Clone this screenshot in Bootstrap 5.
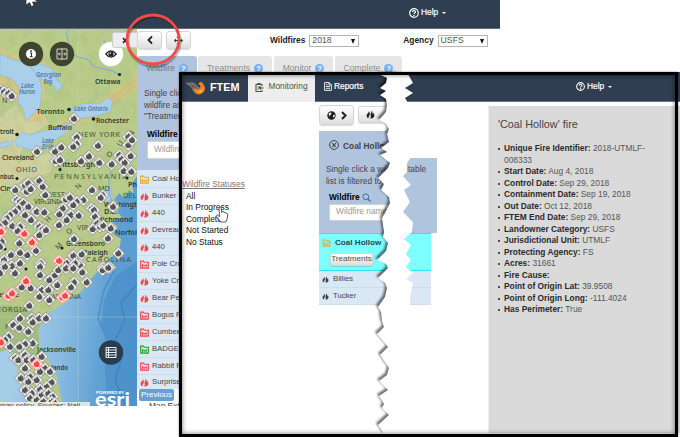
<!DOCTYPE html>
<html lang="en">
<head>
<meta charset="utf-8">
<meta name="viewport" content="width=device-width, initial-scale=1">
<title>FTEM Monitoring</title>
<link href="https://cdn.jsdelivr.net/npm/bootstrap@5.3.0/dist/css/bootstrap.min.css" rel="stylesheet">
<style>
:root{--navy:#2f3e50;--steel:#b0c4de;--pale:#dae8f6}
body{width:680px;height:437px;overflow:hidden;background:#fff;font-family:"Liberation Sans",Arial,sans-serif;font-size:8.4px;line-height:11.5px;color:#444}
svg{display:block;flex:none}
.desk{width:680px;height:437px}
.win-back{left:0;top:0;width:500px;height:406px;background:#fff}
.win-front{left:179px;top:72px;width:501px;height:365px;background:#fff}
.frame{left:179px;top:72px;width:499px;height:365px;border:3px solid #000;box-shadow:inset 0 0 5px rgba(0,0,0,.55),0 0 2px rgba(0,0,0,.45)}
.topbar{background:var(--navy);color:#fff}
.win-back .topbar{height:29px;border-bottom:1px solid #626c7a;padding-left:409px;padding-bottom:2px}
.stroke{-webkit-text-stroke:.2px currentColor}
.help-text{margin:0 4px 0 2px}
.caret{width:0;height:0;border:2.2px solid transparent;border-top-color:#fff;border-bottom:0}
.map-pane{width:137px;height:377px}
.tool-row{height:27px;padding-top:2px}
.tool{border:1px solid #d6d6d6;border-radius:3px;background:linear-gradient(#fff,#dedede);box-shadow:0 1px 1px rgba(0,0,0,.15)}
.tool-row .tool{height:18px;width:25px}
.pick-fire{margin-left:79px}
.pick-agency{margin-left:44px}
.combo{height:12px;width:50px;border:1px solid #b5b5b5;background:#fff;padding:0 3px 0 2px;color:#555;font-size:8.7px}
.tri{width:0;height:0;border:2.5px solid transparent;border-top:5px solid #111;border-bottom:0}
.b{font-weight:700;color:#222}
.tab{height:20px;background:#e6e6e6;border-radius:3px 3px 0 0;color:#8c8c8c;padding-top:5px;font-size:8.6px}
.tab.on{background:var(--steel);color:#777}
.t1{width:60px}.t2{width:74px;margin-left:1px}.t3{width:59px;margin-left:2px}.t4{width:67px;margin-left:2px}
.q{width:9px;height:9px;border-radius:50%;background:#79aef0;color:#fff;font-size:7.5px;line-height:9px;font-weight:700;text-align:center}
.blue{background:var(--steel)}
.back-card{height:94px;width:60px;padding:12px 0 0 7px;white-space:nowrap;overflow:hidden}
.lab{margin:6px 0 1px 3px}
.field{background:#fff;border:1px solid #d0d4da;border-radius:2px;color:#999;height:18px;padding-left:6px;margin-left:3px}
.fires{background:var(--pale)}
.fires>div{height:17px;font-size:7.7px;padding-left:3px;border-bottom:1px solid #cfddeb;white-space:nowrap}
#fires{padding-top:1px}
#fires>div:last-child{height:14px;border-bottom:0}
#fires svg{margin-right:3px}
#fires .folder,#fires .flame{color:#f0444c}
#fires .amber{color:#f0a91c}
#fires .green{color:#1ca31c}
.pager{background:#6c9fcf;color:#fff;border-radius:2px;height:12px;width:35px;font-size:8px;margin-left:2px}
.front-bar{height:30px;border-bottom:1px solid #6a7688}
.brand{width:69px;font-size:10.8px;padding-left:7px;height:30px;padding-top:3px}
.on-tab{width:67px;height:30px;background:#ededed;color:#4a5a3c;padding-top:1px}
.reports{width:252px;padding-left:9px}
.front-help{padding-left:9px}
.status{width:137px;padding:77px 0 0 3px;color:#111}
.status-head{color:#777}
.mid{width:172px;padding:3px 0 0 3px}
.mid-tools{height:26px}
.globe{width:35px;height:20px}
.torch{width:34px;height:17px;margin-top:1px;padding-left:7px;color:#222}
.head-card{height:27px;width:76px;color:#444;padding-left:10px}
.body-card{height:75px;width:118px;padding:6px 0 0 7px;white-space:nowrap}
.body-card .lab{margin:5px 0 0 3px}
.body-card .field{width:70px;height:17px}
.cut{width:82px}
.cyan{height:38px;width:112px;background:#7dffff;border-top:1px solid #2fe6ea;border-bottom:1px solid #2fe6ea;padding:3px 0 0 3px;color:#244a52;font-size:8.1px}
.amber-ic{color:#e0a83c}
.treat{width:43px;height:13px;margin:4px 0 0 8px;color:#555}
.half{width:112px}
.detail{background:#dadada;height:327px;width:192px;border-left:1px solid #eee;padding:12px 25px 0 9px;color:#555}
.detail h2{font-size:10.8px;line-height:12px;color:#444;font-weight:400;margin:0 0 13px}
.detail ul{padding-left:6px;list-style:none}
.detail li{position:relative;line-height:11.5px}
.detail li::before{content:"";position:absolute;left:-6px;top:5px;width:2.4px;height:2.4px;border-radius:50%;background:#222}
.detail b{color:#2b2b2b}
.torn{filter:drop-shadow(-1.5px -1.5px 1px rgba(0,0,0,.55))}
.city text{font-family:"Noto Sans","Open Sans",sans-serif;font-weight:600;font-size:7.2px;fill:#303a2c}
.state text{font-family:"Noto Sans",sans-serif;font-size:7.3px;fill:#455039}
.water text{font-family:"Open Sans",sans-serif;font-style:italic;font-weight:600;font-size:6.6px;fill:#4474a8}
</style>
<script src="https://cdn.jsdelivr.net/npm/bootstrap@5.3.0/dist/js/bootstrap.bundle.min.js"></script>
</head>
<body>
<svg width="0" height="0" class="position-absolute"><defs>
<g id="pin"><path d="M0-6.300 6.300 0 0 6.300-6.300 0Z" fill="#e9e9e9" stroke="#8e8e8e" stroke-width=".8" stroke-linejoin="round"/><path d="M.3-3.800C1-2.300 3.100-1.600 3 .5 2.900 2.300 1.600 3.100 0 3.100-1.700 3.100-3 2.200-3 .4c0-1.100.6-1.900 1.100-2.500l.7.9C-.9-2.300-.2-2.700.3-3.800Z" fill="#555"/></g>
<g id="hot"><path d="M0-6.300 6.300 0 0 6.300-6.300 0Z" fill="#ffdede" stroke="#f88" stroke-width=".8" stroke-linejoin="round"/><path d="M.3-3.800C1-2.300 3.100-1.600 3 .5 2.900 2.300 1.600 3.100 0 3.100-1.700 3.100-3 2.200-3 .4c0-1.100.6-1.900 1.100-2.500l.7.9C-.9-2.300-.2-2.700.3-3.800Z" fill="#fb4646"/></g>
<symbol id="flame" viewBox="0 0 10 10"><path d="M3.200 1.200C3.600 3 .7 4 .7 6.500.7 8 1.700 9 3 9.300 2.600 8 3 7.300 3.700 6.500 4.500 5.300 4.600 3 3.200 1.200Z" fill="currentColor"/><path d="M6.300.5C6.500 2.500 4.900 3.500 5 5.200 5.100 6 5.500 6.500 5.400 7.200 5.200 8 4.800 8.500 4.600 9.300 7.500 9.600 9.400 8 9.300 6 9.200 4.500 8.400 3.800 7.900 3 7.700 3.800 7.600 4.200 7.100 4.500 7.500 3 7.200 1.300 6.300.5Z" fill="currentColor"/></symbol>
<symbol id="folder" viewBox="0 0 10 10"><path d="M.8 9V1.300h3l.8 1.200h4.600V9Z" fill="none" stroke="currentColor" stroke-width="1.300"/><path d="M2.800 8.500V4.300M2.800 6h1.900v2M6.800 8.500V4.500M4.700 6h3" fill="none" stroke="currentColor" stroke-width="1"/></symbol>
<symbol id="help" viewBox="0 0 10 10"><circle cx="5" cy="5" r="4.300" fill="none" stroke="currentColor" stroke-width="1.200"/><path d="M3.500 4C3.500 2 6.600 2.100 6.500 3.900 6.400 4.900 5 4.900 5 6.100" fill="none" stroke="currentColor" stroke-width="1.200"/><circle cx="5" cy="7.500" r=".75" fill="currentColor"/></symbol>
</defs></svg>

<main class="desk position-relative overflow-hidden">
<section class="win-back position-absolute overflow-hidden">
  <nav class="topbar d-flex align-items-center">
    <svg width="10" height="10"><use href="#help"/></svg><span class="stroke help-text">Help</span><span class="caret"></span>
  </nav>
  <div class="d-flex">
    <div class="map-pane">
      <svg width="137" height="377" viewBox="0 29 137 377">
        <defs><linearGradient id="sea" x1="0" x2="1" y1=".3" y2=".6"><stop offset=".25" stop-color="#a5cde8"/><stop offset=".55" stop-color="#8bbce1"/><stop offset=".85" stop-color="#5f9fd3"/><stop offset="1" stop-color="#5a9dd0"/></linearGradient>
        <filter id="relief" x="0" y="0" width="100%" height="100%"><feTurbulence type="fractalNoise" baseFrequency=".09" numOctaves="3" seed="4"/><feColorMatrix values="0 0 0 0 .32  0 0 0 0 .45  0 0 0 0 .15  1.500 0 0 0 -.62"/></filter>
        <clipPath id="landclip"><path id="coast" d="M0 29H137V176L132 184 134 194 129 190 124 198 119 193 114 200 121 205 117 212 122 217 112 222 118 227 113 234 121 239 119 251 108 260 89 281 82 291 65 303 45 315 38 331 41 347 49 361 57 377 61 397 62 406H30L18 378 16 361 7 350 0 352Z"/></clipPath></defs>
        <rect y="29" width="137" height="377" fill="url(#sea)"/>
        <path d="M137 262 116 275 104 300 101 325 111 345 105 365 107 406H137Z" fill="#3f87c3" opacity=".5"/>
        <path d="M137 284 121 303 125 320 115 340 121 360 115 380 126 406M114 271 104 290 98 318 107 340" fill="none" stroke="#2f76b3" stroke-width="1.500" opacity=".45"/>
        <use href="#coast" fill="#b9cc8b"/>
        <g clip-path="url(#landclip)">
          <path d="M0 118 16 104 23 118 40 109 49 124 26 137 17 166 0 178ZM28 157 55 152 51 172 22 180 0 195V177Z" fill="#d6d2a5" opacity=".8"/>
          <path d="M0 48 25 60 39 57 58 72 45 88 43 122 25 122 20 105 0 84ZM88 108 137 74V89L103 112 88 122 71 127 51 133 31 147 24 140Z" fill="#dcc583" opacity=".65"/>
          <path d="M0 305 30 307 42 328 35 359 7 350 0 352Z" fill="#a4bf7c"/>
          <rect y="29" width="137" height="377" filter="url(#relief)" opacity=".35"/>
        </g>
        <g fill="#a9cfea" stroke="#83b4d6" stroke-width=".5">
          <path d="M0 54 14 60 25 62 32 69 39 75 42 90 40 107 26 121 23 108 18 103 20 88 11 78 0 75Z"/>
          <path d="M29 62 44 65 52 69 58 76 56 80 63 84 58 92 52 83 43 80 34 72Z"/>
          <path d="M71 110 82 104 101 103 108 97 113 102 110 112 96 116 76 119Z"/>
          <path d="M15 140 23 132 28 135 36 133 48 130 72 122 71 130 49 143 31 150 17 146Z"/>
          <path d="M0 143 13 141 12 145 0 148ZM104 190 110 187 113 198 106 203Z"/>
        </g>
        <path d="M66 32C70 43 66 47 73 54S87 55 91 63s18 3 28 12M102 63C107 56 108 48 104 40M111 171C107 185 108 195 117 214M51 143 61 165 59 180" fill="none" stroke="#86aecb" stroke-width="1.200"/>
        <path d="M109 100 137 78V84L111 106M22 180 51 176 57 155M78 155H134M41 223 68 198 90 176M41 274 72 249 91 240 120 233M2 301 48 301" stroke="#cbb67d" fill="none" stroke-width="1.200" opacity=".8"/>
        <path d="M78 29V406M0 317H137" stroke="#d5e5c7" stroke-width=".5" opacity=".6"/>
        <g fill="#1b1b1b"><circle cx="119.500" cy="74.500" r="1.600"/><circle cx="69" cy="109.500" r="1.800"/><circle cx="93.500" cy="119" r="1.800"/><circle cx="17" cy="134.500" r="1.800"/><circle cx="17" cy="178.500" r="1.500"/><circle cx="60" cy="169.500" r="1.500"/><circle cx="127" cy="178" r="1.500"/><circle cx="5" cy="249" r="1.500"/><circle cx="62" cy="248" r="1.500"/><circle cx="26" cy="269" r="1.500"/><circle cx="37" cy="344" r="1.500"/></g>
        <g class="water"><text x="36" y="77" textLength="25" lengthAdjust="spacingAndGlyphs">Georgian</text><text x="43.500" y="83.500" textLength="9" lengthAdjust="spacingAndGlyphs">Bay</text><text x="21" y="88" textLength="13" lengthAdjust="spacingAndGlyphs">Lake</text><text x="19" y="94" textLength="16" lengthAdjust="spacingAndGlyphs">Huron</text><text x="74" y="111" textLength="34" lengthAdjust="spacingAndGlyphs">Lake Ontario</text><text x="42" y="142.500" textLength="12" lengthAdjust="spacingAndGlyphs">Lake</text><text x="42" y="149" textLength="11" lengthAdjust="spacingAndGlyphs">Erie</text></g>
        <g class="state"><text x="78" y="136.500" textLength="42">NEW YORK</text><text x="2" y="103">N</text><text x="16" y="172" textLength="21">OHIO</text><text x="54" y="178.500" textLength="73">PENNSYLVANIA</text><text x="46" y="197">WEST</text><text x="34" y="204" textLength="29">VIRGINIA</text><text x="98" y="191">MD</text><text x="123" y="198">DEL</text><text x="77" y="230">VIRG</text><text x="86" y="262" textLength="45">CAROLINA</text><text x="47" y="299" textLength="34">CAROLINA</text><text x="-3" y="312" textLength="30">EORGIA</text><text x="5" y="329">P</text><text transform="rotate(-45 78 190)" x="78" y="190">N</text><text transform="rotate(-45 48 223)" x="48" y="223">H</text><text transform="rotate(-45 69 235)" x="69" y="235">O</text><text transform="rotate(-45 58 250)" x="58" y="250">M</text><text transform="rotate(-40 109 158)" x="109" y="158">O</text><text transform="rotate(-60 121 147)" x="121" y="147">U</text><text transform="rotate(-60 132 137)" x="132" y="137">N</text></g>
        <g class="city"><text x="95" y="84" textLength="25.500" lengthAdjust="spacingAndGlyphs">Ottawa</text><text x="36.500" y="113.500" textLength="28" lengthAdjust="spacingAndGlyphs">Toronto</text><text x="96" y="123" textLength="33" lengthAdjust="spacingAndGlyphs">Rochester</text><text x="48" y="130" textLength="24" lengthAdjust="spacingAndGlyphs">Buffalo</text><text x="0" y="133.500" textLength="14" lengthAdjust="spacingAndGlyphs">troit</text><text x="2" y="160" textLength="32" lengthAdjust="spacingAndGlyphs">Cleveland</text><text x="58" y="166.500" textLength="37" lengthAdjust="spacingAndGlyphs">Pittsburgh</text><text x="0" y="179" textLength="14" lengthAdjust="spacingAndGlyphs">nbus</text><text x="0" y="191">Cin</text><text x="128" y="187">Ph</text><text x="104" y="207" textLength="42" lengthAdjust="spacingAndGlyphs">Washington</text><text x="104" y="214">D.C.</text><text x="98" y="222" textLength="35" lengthAdjust="spacingAndGlyphs">Richmond</text><text x="115" y="234.500" textLength="26" lengthAdjust="spacingAndGlyphs">Norfolk</text><text x="66" y="245.500" textLength="39" lengthAdjust="spacingAndGlyphs">Greensboro</text><text x="83" y="254.500" textLength="25" lengthAdjust="spacingAndGlyphs">Raleigh</text><text x="-10" y="297" textLength="29" lengthAdjust="spacingAndGlyphs">Charlotte</text><text x="37" y="352" textLength="39" lengthAdjust="spacingAndGlyphs">Jacksonville</text><text x="44" y="370" textLength="24" lengthAdjust="spacingAndGlyphs">Orlando</text></g>
        <g id="pins"></g>
        <circle cx="31" cy="54" r="12.200" fill="#3f442e"/><circle cx="31" cy="54" r="5" fill="#fff"/><path d="M30 53h1.500v3.500M29.700 56.700h3" stroke="#333" stroke-width="1.100" fill="none"/><circle cx="31" cy="51" r=".9" fill="#333"/>
        <circle cx="62" cy="54" r="12.200" fill="#3f442e"/><path d="M57 49h10v10H57ZM62 48.500v11M58.500 54h2.500M63.300 54h2.500M59.600 52.800 58.300 54l1.300 1.200M64.500 52.800 65.800 54l-1.300 1.200" stroke="#e8e8e0" fill="none" stroke-width=".9"/>
        <circle cx="111" cy="54" r="12.200" fill="#fff"/><path d="M105.800 54Q111 47.700 116.200 54 111 60.300 105.800 54Z" fill="#fff" stroke="#222" stroke-width="1.200"/><circle cx="111" cy="54" r="2.600" fill="#222"/><circle cx="110.300" cy="53.300" r=".8" fill="#fff"/>
        <circle cx="111" cy="352.500" r="12.200" fill="#2b3c4e"/><path d="M106 347.500h10v10h-10ZM108.500 347.500v10M106 350h10M106 352.500h10M106 355h10" fill="none" stroke="#fff" stroke-width=".9"/>
        <rect y="402" width="90" height="4" fill="#e9eee5" opacity=".9"/><text x="0" y="408" font-size="7" textLength="80" fill="#444">map policy. Sources: Nati</text>
        <g fill="#fff" font-family="Lato,sans-serif" font-weight="700"><text x="96" y="393.500" font-size="4.200" textLength="28" lengthAdjust="spacingAndGlyphs">POWERED BY</text><text x="95" y="405.500" font-size="19" textLength="35" lengthAdjust="spacingAndGlyphs">esri</text></g>
        <g><rect x="112.500" y="32.500" width="26" height="15" rx="2" fill="#ededed" stroke="#ccc"/><path d="m123 38 4 5m0-5-4 5" stroke="#222" stroke-width="1.500"/></g>
      </svg>
    </div>
    <div class="flex-grow-1">
      <div class="tool-row d-flex align-items-start">
        <span class="tool d-flex align-items-center justify-content-center me-1"><svg width="8" height="10" viewBox="0 0 8 10"><path d="M6 1.300 2.500 5 6 8.700" fill="none" stroke="#222" stroke-width="1.900"/></svg></span>
        <span class="tool d-flex align-items-center justify-content-center"><svg width="9" height="9" viewBox="0 0 11 11"><path d="M1 5.500h9M5.500 1v9" stroke="#333" stroke-width="1.200"/><path d="M0 5.500 2.500 3v5ZM11 5.500 8.500 3v5ZM5.500 0 8 2.500H3ZM5.500 11 8 8.500H3Z" fill="#333"/></svg></span>
        <div class="pick-fire d-flex align-items-center pt-1"><span class="b me-1">Wildfires</span><span class="combo d-flex align-items-center justify-content-between">2018<i class="tri"></i></span></div>
        <div class="pick-agency d-flex align-items-center pt-1"><span class="b me-1">Agency</span><span class="combo d-flex align-items-center justify-content-between">USFS<i class="tri"></i></span></div>
      </div>
      <div class="d-flex">
        <div class="tab on t1 d-flex align-items-center justify-content-center gap-1">Wildfire<span class="q">?</span></div>
        <div class="tab t2 d-flex align-items-center justify-content-center gap-1">Treatments<span class="q">?</span></div>
        <div class="tab t3 d-flex align-items-center justify-content-center gap-1">Monitor<span class="q">?</span></div>
        <div class="tab t4 d-flex align-items-center justify-content-center gap-1">Complete<span class="q">?</span></div>
      </div>
      <div class="blue back-card">
        Single click a<br>wildfire as the<br>"Treatments"
        <div class="lab b text-black">Wildfire</div>
        <div class="field d-flex align-items-center">Wildfire name</div>
      </div>
      <div class="fires" id="fires"></div>
      <span class="pager d-flex align-items-center justify-content-center">Previous</span>
      <div class="ps-2 ms-1">Map Extent</div>
    </div>
  </div>
</section>

<svg class="position-absolute top-0 start-0" width="200" height="75" viewBox="0 0 200 75"><path d="M26-7V5L29.500 2.500 31.500 6.500 34 5.500 32.500 2 38 2Z" fill="#fff" stroke="#17202b" stroke-width=".6"/><ellipse cx="154" cy="41.500" rx="26" ry="25" fill="none" stroke="#000" stroke-opacity=".25" stroke-width="3"/><ellipse cx="153" cy="39.500" rx="26" ry="24.500" fill="none" stroke="#f24949" stroke-width="2.800"/></svg>

<section class="win-front position-absolute overflow-hidden">
  <nav class="topbar front-bar d-flex align-items-center">
    <div class="brand d-flex align-items-center fw-bold">
      <svg width="20" height="16" viewBox="0 0 20 16" class="me-1"><path d="M.5 3C4 4 5 2 8 3.500S11 8 13 7.500C9 8.500 9 12 12 13.500 7 13.500 7 8.500 5 6.500 4 5 2 5 .5 3Z" fill="#6a6360" stroke="#c9b8a5" stroke-width=".5"/><path d="M8 7C9 10 14 9.500 14.500 6.500 14.500 4.500 12.500 4.500 12.500 5.500 12 3 14 1 17 2.500 14.500 2.500 19 4.500 19 8.500 18.500 14 12 16 9.500 13 8 11 8 9 8 7Z" fill="#ef8124"/><path d="M10.500 11C13 12.500 16 11 16 8.500 17.500 11 14 14 10.500 11Z" fill="#ffd27d"/></svg>FTEM</div>
    <div class="on-tab d-flex align-items-center justify-content-center"><svg width="9" height="9" viewBox="0 0 9 9" class="me-1"><path d="M7 3V1.500H1v7h6V7M2.800 1.500V.5h2.400v1M2.500 4H5M2.500 6H4M8.700 5H4.500M6 3.500 4.500 5 6 6.500" fill="none" stroke="currentColor" stroke-width="1.100"/></svg>Monitoring</div>
    <div class="reports stroke d-flex align-items-center"><svg width="8" height="9" viewBox="0 0 8 9"><path d="M.6.6h4.600L7.400 3v5.400H.6ZM5 .6V3h2.400M2 4.500h4M2 6.300h4M2 2.800h1.500" fill="none" stroke="#fff" stroke-width=".9"/></svg><span class="help-text">Reports</span></div>
    <div class="front-help d-flex align-items-center"><svg width="9" height="9"><use href="#help"/></svg><span class="stroke help-text">Help</span><span class="caret"></span></div>
  </nav>
  <div class="d-flex">
    <div class="status">
      <div class="status-head text-decoration-underline">Wildfire Statuses</div>
      <div class="ps-1">All<br>In Progress<br>Complete<br>Not Started<br>No Status</div>
    </div>
    <div class="mid">
      <div class="mid-tools d-flex align-items-start gap-1">
        <span class="tool globe d-flex align-items-center justify-content-center gap-1"><svg width="9" height="9" viewBox="0 0 9 9"><circle cx="4.500" cy="4.500" r="4.200" fill="#1d1d1d"/><path d="M1.500 2.500 4 1.200 4.500 3 2.800 4.500 2.500 6ZM6 4.500 8 3.500 7.600 6 6 6.500Z" fill="#eee"/></svg><svg width="7" height="9" viewBox="0 0 7 9"><path d="M2 1 5.500 4.500 2 8" fill="none" stroke="#222" stroke-width="2"/></svg></span>
        <span class="tool torch d-flex align-items-center"><svg width="9" height="9"><use href="#flame"/></svg></span>
      </div>
      <div class="blue head-card d-flex align-items-center fw-bold"><svg width="10" height="10" viewBox="0 0 10 10"><circle cx="5" cy="5" r="4.400" fill="none" stroke="#444" stroke-width="1"/><path d="m3.200 3.200 3.600 3.600m0-3.600L3.200 6.800" stroke="#444" stroke-width="1.100"/></svg><span class="ps-1 pt-1">Coal Hollow</span></div>
      <div class="blue body-card">
        <div class="d-flex"><span class="cut overflow-hidden">Single click a wildfire in the</span>table</div>
        <div>list is filtered to</div>
        <div class="lab d-flex align-items-center b text-black">Wildfire<svg width="11" height="9" viewBox="-2 0 11 9"><circle cx="3.800" cy="3.800" r="2.900" fill="none" stroke="#3a6ea5" stroke-width="1"/><path d="m6 6 2.500 2.500" stroke="#3a6ea5" stroke-width="1.300"/></svg></div>
        <div class="field d-flex align-items-center">Wildfire name</div>
      </div>
      <div class="cyan">
        <div class="d-flex align-items-center fw-bold"><svg width="9" height="8" class="amber-ic me-1"><use href="#folder"/></svg>Coal Hollow</div>
        <div class="tool treat d-flex align-items-center justify-content-center">Treatments</div>
      </div>
      <div class="fires half"><div class="d-flex align-items-center"><svg width="7" height="7" class="me-1"><use href="#flame"/></svg>Billies</div><div class="d-flex align-items-center"><svg width="7" height="7" class="me-1"><use href="#flame"/></svg>Tucker</div></div>
    </div>
    <aside class="detail mt-1">
      <h2>'Coal Hollow' fire</h2>
      <ul class="mb-0" id="facts"></ul>
    </aside>
  </div>
</section>

<svg class="position-absolute top-0 start-0" width="680" height="437" viewBox="0 0 680 437">
  <path class="torn" d="M379 74 387 78 386 83 380 88 386 91 380 95 386 99 387 105 386 112 379 120 386 124 389 129 387 134 389 142 381 148 387 152 380 155 390 163 388 168 378 178 384 184 381 190 389 197 390 203 385 213 382 218 384 232 383 237 388 243 386 251 377 260 386 264 388 268 378 278 385 283 387 288 385 297 378 307 381 312 382 321 384 327 377 334 388 347 380 355 389 368 387 375 379 381 388 390 379 396 384 404 382 408 389 415 378 425 384 434H398V74Z" fill="#fff"/>
  <path d="M390 74H408L413 83 405 88 413 93 405 98 408 103 410 125 411 157 407 163 407 172 403 176 411 185 404 190 410 202 403 212 413 222 412 232 404 239 411 245 406 254 411 260 406 267 413 273 406 279 413 283 410 298 412 434H390Z" fill="#fff"/>
  <path d="M219 208.500c0-1.600 2-1.600 2.200 0l.5 4 .4-1c1.300-.5 1.800.2 1.900 1 .9-.6 1.700 0 1.900.8 1.100-.4 1.900.3 1.800 1.700l-.6 4-1.300 3h-5l-4.300-5.500c-.7-1.600.8-2.200 1.800-1l1.200 1.300Z" fill="#fff" stroke="#444" stroke-width=".9"/>
</svg>
<div class="frame position-absolute"></div>
</main>
<script>
// Map pins, in map coordinates multiplied by three
const groups=[
 [0,"222,356 0,270 12,275 25,280 35,288 385,410 230,412"],
 [390,"111,65 165,65 184,52 167,93 180,90 230,42 220,50 294,47 243,94 267,79 298,98 335,103 358,75 364,88 374,98 385,45 392,78 396,30 371,123 394,125 46,180 75,165 85,160 80,185 92,177 118,152 128,170 136,195 276,180 308,196 302,203 339,230 198,208 210,203 250,210 230,215 220,225 188,235 178,253 212,255 236,257 200,270 177,285 275,235 282,240 285,260 292,280 278,297 300,290 310,287 332,295 324,325 50,210 60,215 70,220 55,235 45,245 85,230 30,255 20,265 75,255 93,270 110,245 133,247 15,278 0,290 37,288 60,290 53,303 118,290 128,297 118,315 138,300 58,340 5,335 33,375 82,375 60,368 108,362 0,350 12,390 222,327 355,370 220,377 245,373 122,400 10,408 35,408 60,400 200,400 215,412 240,405 225,400 308,412 330,412"],
 [795,"45,25 15,5 0,25 120,5 120,30 65,67 92,70 165,30 175,15 198,10 220,10 247,22 148,45 172,60 125,75 145,75 118,95 148,105 222,52 213,67 260,52 308,15 325,8 88,122 60,160 40,180 58,188 95,160 105,165 117,160 138,160 98,172 85,200 25,215 15,225 30,245 98,235 75,237 58,245 75,270 125,275 45,280 55,285 80,285 100,285 75,310 135,310 120,320 150,320 62,340 90,335 155,352 110,345 85,350 140,365 120,373 75,375 95,385 125,390 145,385 158,395 90,400 110,405 130,410 155,410 165,415"]];
const hot=[[390,"73,311 96,337 3,305 177,392"],[795,"78,48 187,97 195,92 25,92 36,85 3,232 110,297"]];
const draw=(id,list)=>list.map(([dy,s])=>s.split(" ").map(p=>{const[x,y]=p.split(",");return `<use href="#${id}" x="${(x/3).toFixed(1)}" y="${((+y+dy)/3).toFixed(1)}"/>`}).join("")).join("");
document.getElementById("pins").innerHTML=draw("pin",groups)+draw("hot",hot);

const fires=[["Coal Hollow","folder","amber"],["Bunker Spring","flame"],["440","flame"],["Devreaux","flame"],["440","flame"],["Pole Creek","folder"],["Yoke Creek","flame"],["Bear Pen","flame"],["Bogus Ridge","folder"],["Cumbee","folder"],["BADGER","folder","green"],["Rabbit Foot","folder"],["Surprise","flame"]];
document.getElementById("fires").innerHTML=fires.map(([n,i,c])=>`<div class="d-flex align-items-center"><svg width="9" height="9" class="${c||i}"><use href="#${i}"/></svg>${n}</div>`).join("");

const facts=[["Unique Fire Identifier","2018-UTMLF-008333"],["Start Date","Aug 4, 2018"],["Control Date","Sep 29, 2018"],["Containment Date","Sep 19, 2018"],["Out Date","Oct 12, 2018"],["FTEM End Date","Sep 29, 2018"],["Landowner Category","USFS"],["Jurisdictional Unit","UTMLF"],["Protecting Agency","FS"],["Acres","31661"],["Fire Cause",""],["Point of Origin Lat","39.9508"],["Point of Origin Long","-111.4024"],["Has Perimeter","True"]];
document.getElementById("facts").innerHTML=facts.map(([k,v])=>`<li><b>${k}:</b> ${v}</li>`).join("");
</script>
</body>
</html>
